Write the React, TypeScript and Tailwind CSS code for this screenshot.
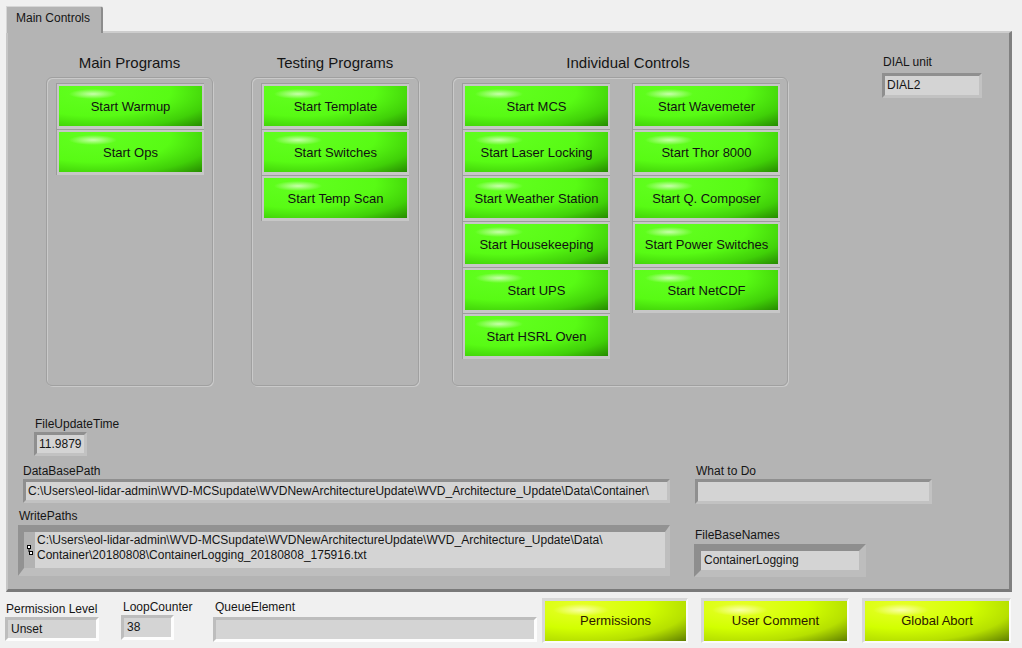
import React from 'react';

const GreenButton: React.FC<{ label: string }> = ({ label }) => (
  <div className="w-[148px] h-[46px] border-t border-l border-t-[#9d9d9d] border-l-[#9d9d9d] bg-[#c7c7c7] pt-[2px] pl-[2px] pr-[2px] pb-[3px]">
    <div className="h-full flex items-center justify-center pt-px text-[13px] text-[#111111] bg-[radial-gradient(ellipse_24px_5px_at_34px_8px,rgba(225,255,205,0.8),rgba(225,255,205,0)),radial-gradient(ellipse_at_25%_15%,#62ff20_0%,#58fb14_50%,#40d008_78%,#268a00_100%)]">
      {label}
    </div>
  </div>
);

const YellowButton: React.FC<{ label: string; className: string }> = ({ label, className }) => (
  <div className={`h-[45px] border-t-[3px] border-l-[3px] border-r-2 border-b-2 border-t-[#d8d8d8] border-l-[#d8d8d8] border-r-[#fbfbfb] border-b-[#fbfbfb] ${className}`}>
    <div className="h-full flex items-center justify-center text-[13px] text-[#2b1800] bg-[radial-gradient(ellipse_28px_6px_at_36px_9px,rgba(255,255,200,0.8),rgba(255,255,200,0)),radial-gradient(ellipse_at_25%_15%,#e8ff2c_0%,#d2ff00_45%,#b6e000_72%,#5f7f00_100%)]">
      {label}
    </div>
  </div>
);

// sunken indicator on the grey panel
const Field: React.FC<{ className: string; children?: React.ReactNode }> = ({ className, children }) => (
  <div className={`border-[3px] border-t-[#8f8f8f] border-l-[#8f8f8f] border-r-[#c2c2c2] border-b-[#c2c2c2] bg-[#d4d4d4] text-[12px] pl-[2px] whitespace-nowrap overflow-hidden ${className}`}>
    {children}
  </div>
);

// sunken indicator on the light window background
const LightField: React.FC<{ className: string; children?: React.ReactNode }> = ({ className, children }) => (
  <div className={`border-[3px] border-t-[#bdbdbd] border-l-[#bdbdbd] border-r-[#fdfdfd] border-b-[#fdfdfd] bg-[#d4d4d4] text-[12px] pl-[3px] whitespace-nowrap overflow-hidden ${className}`}>
    {children}
  </div>
);

const Label: React.FC<{ text: string; className?: string }> = ({ text, className }) => (
  <div className={`h-[15px] text-[12px] leading-[15px] whitespace-nowrap ${className ?? ''}`}>{text}</div>
);

const GroupBox: React.FC<{ className: string; children: React.ReactNode }> = ({ className, children }) => (
  <div className={`mt-[4px] h-[309px] rounded-[6px] border border-[#a0a0a0] shadow-[1px_1px_0_#cacaca,inset_1px_1px_0_#cacaca] pt-[5px] pl-[9px] ${className}`}>
    {children}
  </div>
);

export default function App() {
  return (
    <div className="w-[1022px] h-[648px] overflow-hidden bg-[#f0f0f0] text-[#151515] font-['Liberation_Sans',Arial,sans-serif]">
      {/* tab strip */}
      <div className="h-[31px] pt-[6px] pl-[6px]">
        <div className="relative z-10 w-[97px] h-[27px] bg-[#b4b4b4] border-t border-l border-t-[#d6d6d6] border-l-[#d6d6d6] border-r-2 border-r-[#8c8c8c] rounded-tr-[3px] pl-[9px] pt-[4px] text-[12px] leading-[15px]">
          Main Controls
        </div>
      </div>

      {/* tab page */}
      <div className="ml-[6px] w-[1006px] h-[561px] bg-[#b4b4b4] border-t-2 border-l-2 border-t-[#cdcdcd] border-l-[#c6c6c6] border-r-[3px] border-b-[3px] border-r-[#808080] border-b-[#7a7a7a]">
        <div className="flex items-start pt-[20px] pl-[38px]">
          <div className="w-[167px]">
            <div className="h-[20px] leading-[20px] text-center text-[15px]">Main Programs</div>
            <GroupBox className="flex flex-col">
              <GreenButton label="Start Warmup" />
              <GreenButton label="Start Ops" />
            </GroupBox>
          </div>

          <div className="w-[168px] ml-[38px]">
            <div className="h-[20px] leading-[20px] text-center text-[15px]">Testing Programs</div>
            <GroupBox className="flex flex-col">
              <GreenButton label="Start Template" />
              <GreenButton label="Start Switches" />
              <GreenButton label="Start Temp Scan" />
            </GroupBox>
          </div>

          <div className="w-[336px] ml-[33px]">
            <div className="h-[20px] leading-[20px] text-center text-[15px] pl-[16px]">Individual Controls</div>
            <GroupBox className="flex gap-[22px]">
              <div className="flex flex-col">
                <GreenButton label="Start MCS" />
                <GreenButton label="Start Laser Locking" />
                <GreenButton label="Start Weather Station" />
                <GreenButton label="Start Housekeeping" />
                <GreenButton label="Start UPS" />
                <GreenButton label="Start HSRL Oven" />
              </div>
              <div className="flex flex-col">
                <GreenButton label="Start Wavemeter" />
                <GreenButton label="Start Thor 8000" />
                <GreenButton label="Start Q. Composer" />
                <GreenButton label="Start Power Switches" />
                <GreenButton label="Start NetCDF" />
              </div>
            </GroupBox>
          </div>

          <div className="ml-[94px] pt-[2px]">
            <Label text="DIAL unit" className="pl-[1px]" />
            <Field className="mt-[3px] w-[100px] h-[25px] leading-[19px]">DIAL2</Field>
          </div>
        </div>

        {/* FileUpdateTime */}
        <div className="mt-[31px] pl-[26px]">
          <Label text="FileUpdateTime" className="pl-[1px]" />
          <Field className="w-[53px] h-[24px] leading-[18px]">11.9879</Field>
        </div>

        {/* DataBasePath / What to Do */}
        <div className="mt-[8px] pl-[15px] flex items-start">
          <div className="w-[647px]">
            <Label text="DataBasePath" />
            <Field className="w-[647px] h-[24px] leading-[18px]">
              C:\Users\eol-lidar-admin\WVD-MCSupdate\WVDNewArchitectureUpdate\WVD_Architecture_Update\Data\Container\
            </Field>
          </div>
          <div className="ml-[25px]">
            <Label text="What to Do" className="pl-[1px]" />
            <Field className="w-[237px] h-[25px]" />
          </div>
        </div>

        {/* WritePaths / FileBaseNames */}
        <div className="mt-[5px] pl-[10px] flex items-start">
          <div>
            <Label text="WritePaths" className="pl-[1px]" />
            <div className="mt-px w-[652px] h-[51px] flex border-t-[7px] border-l-[6px] border-b-[8px] border-r-[5px] border-t-[#929292] border-l-[#929292] border-b-[#bebebe] border-r-[#bebebe] bg-[#b2b2b2]">
              <div className="w-[11px] flex items-center pl-[3px]">
                <svg width="7" height="11" viewBox="0 0 7 11">
                  <rect x="0.5" y="0.5" width="3" height="3" fill="#ffffff" stroke="#000000" strokeWidth="1" />
                  <line x1="2" y1="3.5" x2="2" y2="7" stroke="#000000" strokeWidth="1" />
                  <rect x="2.5" y="6.5" width="3" height="3" fill="#ffffff" stroke="#000000" strokeWidth="1" />
                </svg>
              </div>
              <div className="flex-1 bg-[#d4d4d4] text-[12px] leading-[15px] pt-[1px] pl-[2px] whitespace-nowrap overflow-hidden">
                <div>C:\Users\eol-lidar-admin\WVD-MCSupdate\WVDNewArchitectureUpdate\WVD_Architecture_Update\Data\</div>
                <div>Container\20180808\ContainerLogging_20180808_175916.txt</div>
              </div>
            </div>
          </div>
          <div className="ml-[24px] mt-[19px]">
            <Label text="FileBaseNames" className="pl-[1px]" />
            <div className="mt-px w-[172px] h-[33px] border-[7px] border-t-[#8e8e8e] border-l-[#8e8e8e] border-r-[#bdbdbd] border-b-[#bdbdbd] bg-[#d4d4d4] text-[12px] leading-[19px] pl-[3px] whitespace-nowrap">
              ContainerLogging
            </div>
          </div>
        </div>
      </div>

      {/* bottom bar */}
      <div className="flex items-start">
        <div className="ml-[5px] mt-[10px] w-[94px]">
          <Label text="Permission Level" className="pl-[1px]" />
          <LightField className="w-[94px] h-[24px] leading-[18px]">Unset</LightField>
        </div>
        <div className="ml-[22px] mt-[8px] w-[53px]">
          <Label text="LoopCounter" className="pl-[2px]" />
          <LightField className="w-[53px] h-[25px] leading-[19px]">38</LightField>
        </div>
        <div className="ml-[39px] mt-[8px] w-[324px]">
          <Label text="QueueElement" className="pl-[2px]" />
          <LightField className="mt-[2px] w-[324px] h-[25px]" />
        </div>
        <YellowButton label="Permissions" className="ml-[5px] mt-[6px] w-[146px]" />
        <YellowButton label="User Comment" className="ml-[13px] mt-[6px] w-[148px]" />
        <YellowButton label="Global Abort" className="ml-[13px] mt-[6px] w-[149px]" />
      </div>
    </div>
  );
}
